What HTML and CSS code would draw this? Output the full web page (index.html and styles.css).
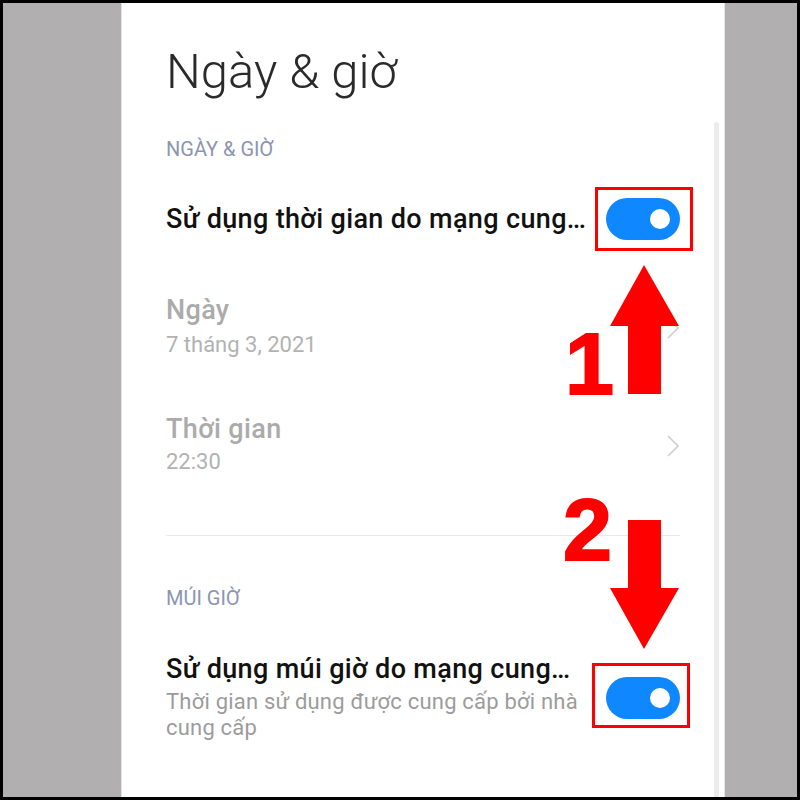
FILE: index.html
```html
<!DOCTYPE html>
<html lang="vi">
<head>
<meta charset="utf-8">
<title>Ngày &amp; giờ</title>
<link rel="stylesheet" href="styles.css">
</head>
<body>
<div class="frame">
  <div class="stage">
    <div class="backdrop-left"></div>
    <main class="panel">
      <h1 class="page-title">Ngày &amp; giờ</h1>

      <div class="section-label">NGÀY &amp; GIỜ</div>

      <div class="row row-first">
        <div class="row-text">
          <div class="row-title">Sử dụng thời gian do mạng cung…</div>
        </div>
        <div class="toggle"><span class="knob"></span></div>
      </div>

      <div class="row row-nav row-date">
        <div class="row-text">
          <div class="row-title disabled">Ngày</div>
          <div class="row-sub disabled">7 tháng 3, 2021</div>
        </div>
        <svg class="chevron" width="12" height="22" viewBox="0 0 12 22"><polyline points="1,1 11,11 1,21" fill="none" stroke="#cfcfcf" stroke-width="1.6"/></svg>
      </div>

      <div class="row row-nav row-time">
        <div class="row-text">
          <div class="row-title disabled">Thời gian</div>
          <div class="row-sub disabled">22:30</div>
        </div>
        <svg class="chevron" width="12" height="22" viewBox="0 0 12 22"><polyline points="1,1 11,11 1,21" fill="none" stroke="#cfcfcf" stroke-width="1.6"/></svg>
      </div>

      <div class="divider"></div>

      <div class="section-label section-zone">MÚI GIỜ</div>

      <div class="row row-zone">
        <div class="row-text">
          <div class="row-title">Sử dụng múi giờ do mạng cung…</div>
          <div class="row-sub wrap">Thời gian sử dụng được cung cấp bởi nhà cung cấp</div>
        </div>
        <div class="toggle"><span class="knob"></span></div>
      </div>

      <div class="scrollbar"></div>
    </main>
    <div class="backdrop-right"></div>
  </div>

  <div class="mark box-one"></div>
  <div class="mark box-two"></div>

  <svg class="arrow arrow-up" width="70" height="130" viewBox="0 0 70 130">
    <polygon points="34,0 69,61 51,61 51,129 18,129 18,61 0,61" fill="#ff0000"/>
  </svg>
  <svg class="arrow arrow-down" width="70" height="130" viewBox="0 0 70 130">
    <polygon points="18,0 51,0 51,68 69,68 34,129 0,68 18,68" fill="#ff0000"/>
  </svg>

  <span class="num num-one">1</span>
  <span class="num num-two">2</span>
</div>
</body>
</html>
```

FILE: styles.css
```css
* { box-sizing: border-box; }

html, body {
  margin: 0;
  padding: 0;
  background: #000;
}

.frame {
  position: relative;
  width: 800px;
  height: 800px;
  padding: 3px;
  background: #000;
}

.stage {
  display: flex;
  height: 794px;
  background: #b1afb0;
}

.backdrop-left { width: 118px; flex: none; }
.backdrop-right { flex: 1; }

.panel {
  position: relative;
  width: 604px;
  flex: none;
  background: #fff;
  padding: 38px 44px 0;
  border-left: 1px solid #e4e4e4;
  border-right: 1px solid #e4e4e4;
  overflow: hidden;
  font-family: Roboto, "Noto Sans", sans-serif;
}

.page-title {
  margin: 0;
  font-weight: 300;
  font-size: 49px;
  line-height: 62px;
  color: #2a2a2a;
}

.section-label {
  margin-top: 34px;
  font-size: 20px;
  line-height: 24px;
  color: #8c95b2;
}

.row {
  display: flex;
  align-items: center;
}

.row-text {
  flex: 1;
  min-width: 0;
}

.row-title {
  font-weight: 500;
  font-size: 27px;
  line-height: 30px;
  letter-spacing: 0.35px;
  color: #111;
  white-space: nowrap;
}

.row-sub {
  margin-top: 5px;
  font-size: 22px;
  line-height: 30px;
  color: #9c9c9c;
}

.row-sub.wrap {
  font-size: 22px;
  line-height: 26px;
  letter-spacing: 0.2px;
  max-width: 420px;
}

.disabled { color: #ababab; }
.row-sub.disabled { color: #b2b2b2; }

.row-first { margin-top: 37px; }
.row-date { margin-top: 55px; }
.row-time { margin-top: 54px; }
.row-time .row-sub { margin-top: 3px; }

.chevron {
  flex: none;
  margin-right: 1px;
}

.divider {
  margin-top: 58px;
  height: 1px;
  background: #e9e9e9;
}

.section-zone { margin-top: 50px; }

.row-zone { margin-top: 44px; }

.toggle {
  flex: none;
  width: 74px;
  height: 42px;
  margin-left: 15px;
  border-radius: 21px;
  background: #0f87ff;
  display: flex;
  align-items: center;
  justify-content: flex-end;
  padding-right: 10px;
}

.knob {
  width: 20px;
  height: 20px;
  border-radius: 50%;
  background: #fff;
}

.scrollbar {
  position: absolute;
  left: 592px;
  top: 119px;
  width: 5px;
  height: 700px;
  border-radius: 3px;
  background: #ececec;
}

.mark {
  position: absolute;
  border: 3px solid #ff0000;
}

.box-one { left: 595px; top: 187px; width: 98px; height: 64px; }
.box-two { left: 592px; top: 663px; width: 98px; height: 65px; }

.arrow { position: absolute; }
.arrow-up { left: 610px; top: 265px; }
.arrow-down { left: 610px; top: 520px; }

.num {
  position: absolute;
  font-family: "Liberation Sans", Arial, sans-serif;
  font-weight: 700;
  font-size: 88px;
  line-height: 88px;
  color: #ff0000;
  -webkit-text-stroke: 2px #ff0000;
}

.num-one { left: 565px; top: 320px; }
.num-two { left: 563px; top: 486px; }
```
